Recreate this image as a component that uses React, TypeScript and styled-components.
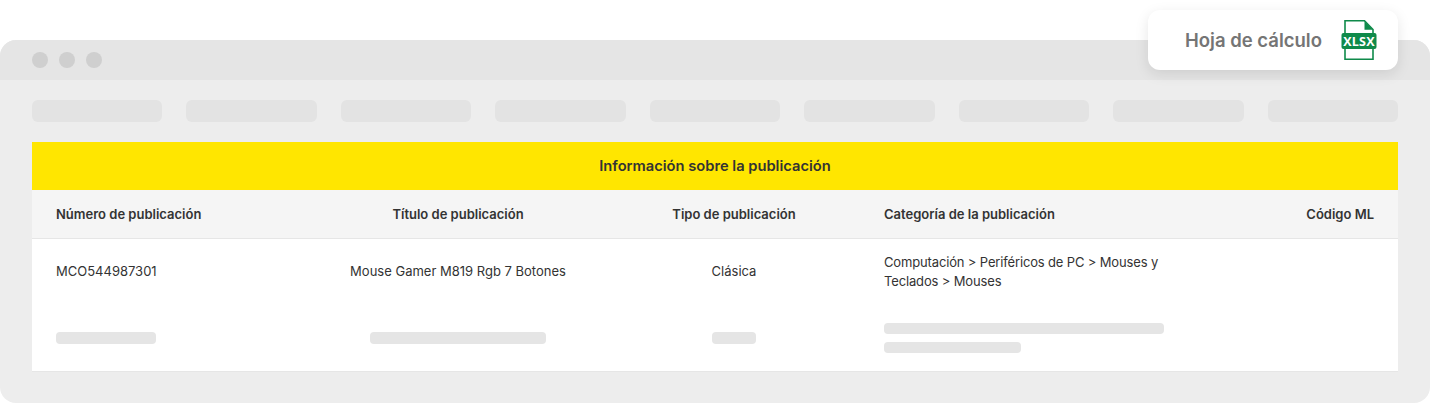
import React from "react";
import styled, { createGlobalStyle } from "styled-components";

const GlobalStyle = createGlobalStyle`
  html, body {
    margin: 0;
    padding: 0;
    background: #fff;
  }
  body {
    font-family: "Inter", "Liberation Sans", sans-serif;
    color: #333;
  }
`;

const columns = [
  { title: "Número de publicación", align: "left" },
  { title: "Título de publicación", align: "center" },
  { title: "Tipo de publicación", align: "center" },
  { title: "Categoría de la publicación", align: "left" },
  { title: "Código ML", align: "right" },
];

const XlsxIcon = () => (
  <svg width="36" height="42" viewBox="0 0 36 42" fill="none">
    <path d="M4 14V1.800h19.500l8.500 8.700V14M4 30v10.200h28V30" stroke="#0f8a4a" strokeWidth="1.600" />
    <path d="M23.500 2l8.500 8.700h-8.500z" fill="#0f8a4a" />
    <rect x="0.500" y="14" width="35" height="16" rx="2" fill="#0f8a4a" />
    <XlsxLabel x="18" y="27" textAnchor="middle">XLSX</XlsxLabel>
  </svg>
);

export default function App() {
  return (
    <>
      <GlobalStyle />
      <Page>
        <SheetCard>
          <SheetLabel>Hoja de cálculo</SheetLabel>
          <XlsxIcon />
        </SheetCard>
        <BrowserWindow>
          <TitleBar>
            <Dot />
            <Dot />
            <Dot />
          </TitleBar>
          <Content>
            <Filters>
              {Array.from({ length: 9 }).map((_, i) => (
                <FilterPill key={i} />
              ))}
            </Filters>
            <Table>
              <Banner>Información sobre la publicación</Banner>
              <HeadRow>
                {columns.map((c) => (
                  <HeadCell key={c.title} $align={c.align}>
                    {c.title}
                  </HeadCell>
                ))}
              </HeadRow>
              <DataRow>
                <Cell $align="left">MCO544987301</Cell>
                <Cell $align="center">Mouse Gamer M819 Rgb 7 Botones</Cell>
                <Cell $align="center">Clásica</Cell>
                <CategoryCell $align="left">
                  Computación &gt; Periféricos de PC &gt; Mouses y Teclados &gt; Mouses
                </CategoryCell>
                <Cell $align="right" />
              </DataRow>
              <GhostRow>
                <Ghost $width={100} />
                <Ghost $width={176} $center />
                <Ghost $width={44} $center />
                <GhostStack>
                  <GhostLine $width={280} />
                  <GhostLine $width={137} />
                </GhostStack>
                <Cell $align="right" />
              </GhostRow>
            </Table>
          </Content>
        </BrowserWindow>
      </Page>
    </>
  );
}

const Page = styled.div`
  position: relative;
  width: 1430px;
  height: 403px;
  padding-top: 40px;
  box-sizing: border-box;
  overflow: hidden;
`;

const SheetCard = styled.div`
  position: absolute;
  top: 10px;
  right: 32px;
  width: 250px;
  height: 60px;
  box-sizing: border-box;
  padding: 0 21px 0 37px;
  display: flex;
  align-items: center;
  justify-content: space-between;
  background: #fff;
  border-radius: 12px;
  box-shadow: 0 4px 14px rgba(0, 0, 0, 0.1);
`;

const SheetLabel = styled.span`
  font-size: 18.500px;
  font-weight: 600;
  color: #757575;
`;

const XlsxLabel = styled.text`
  font-family: "Open Sans", "Liberation Sans", sans-serif;
  font-size: 12.500px;
  font-weight: 700;
  fill: #fff;
  letter-spacing: 0.2px;
`;

const BrowserWindow = styled.div`
  height: 363px;
  border-radius: 16px;
  overflow: hidden;
  background: #ededed;
`;

const TitleBar = styled.div`
  height: 40px;
  padding-left: 32px;
  display: flex;
  align-items: center;
  gap: 11px;
  background: #e5e5e5;
`;

const Dot = styled.span`
  width: 16px;
  height: 16px;
  border-radius: 50%;
  background: #cfcfcf;
`;

const Content = styled.div`
  padding: 20px 32px 0;
`;

const Filters = styled.div`
  display: grid;
  grid-template-columns: repeat(9, 1fr);
  column-gap: 24px;
`;

const FilterPill = styled.div`
  height: 22px;
  border-radius: 6px;
  background: #e3e3e3;
`;

const Table = styled.div`
  margin-top: 20px;
  background: #fff;
  border-bottom: 1px solid #e6e6e6;
`;

const Banner = styled.div`
  height: 48px;
  box-sizing: border-box;
  padding-bottom: 1px;
  display: flex;
  align-items: center;
  justify-content: center;
  background: #ffe600;
  font-size: 14.700px;
  font-weight: 600;
  color: #333;
`;

const Row = styled.div`
  display: grid;
  grid-template-columns: 276px 252px 300px 280px 1fr;
  align-items: center;
  padding: 0 24px;
`;

const HeadRow = styled(Row)`
  height: 49px;
  box-sizing: border-box;
  background: #f5f5f5;
  border-bottom: 1px solid #e6e6e6;
`;

const DataRow = styled(Row)`
  height: 66px;
  box-sizing: border-box;
  padding-bottom: 2px;
`;

const GhostRow = styled(Row)`
  height: 66px;
`;

const HeadCell = styled.div<{ $align: string }>`
  text-align: ${(p) => p.$align};
  font-size: 13px;
  font-weight: 600;
  color: #333;
`;

const Cell = styled.div<{ $align: string }>`
  text-align: ${(p) => p.$align};
  font-size: 13px;
  line-height: 19px;
  color: #333;
`;

const CategoryCell = styled(Cell)`
  padding-top: 2px;
  letter-spacing: -0.15px;
`;

const GhostStack = styled.div`
  display: flex;
  flex-direction: column;
  gap: 8px;
`;

const GhostLine = styled.div<{ $width: number }>`
  width: ${(p) => p.$width}px;
  height: 11px;
  border-radius: 4px;
  background: #e5e5e5;
`;

const Ghost = styled(GhostLine)<{ $center?: boolean }>`
  height: 12px;
  margin: ${(p) => (p.$center ? "0 auto" : "0")};
`;
